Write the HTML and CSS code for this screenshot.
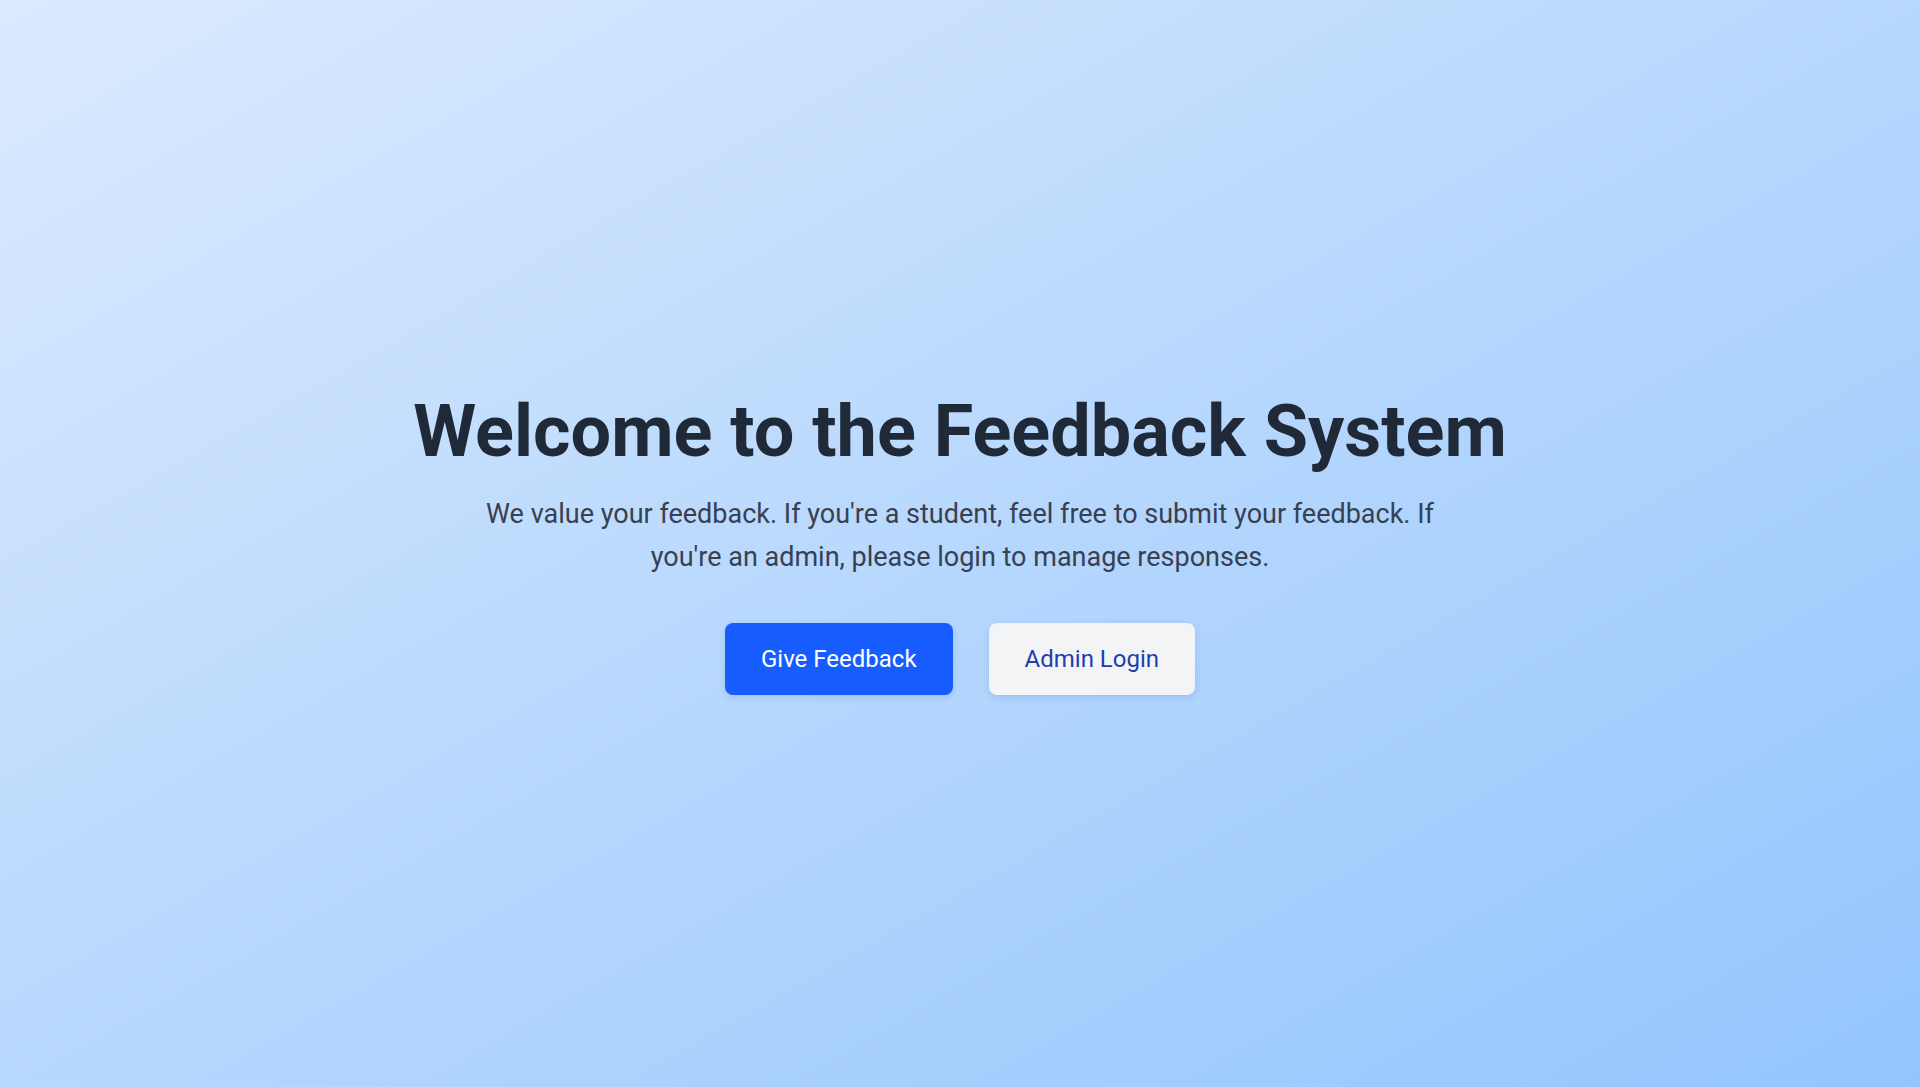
FILE: index.html
```html
<!DOCTYPE html>
<html lang="en">
<head>
<meta charset="utf-8">
<title>Feedback System</title>
<link rel="stylesheet" href="styles.css">
</head>
<body>
<main class="hero">
  <h1 class="title">Welcome to the Feedback System</h1>
  <p class="lead">We value your feedback. If you're a student, feel free to submit your feedback. If you're an admin, please login to manage responses.</p>
  <div class="actions">
    <a class="btn btn-primary" href="#">Give Feedback</a>
    <a class="btn btn-secondary" href="#">Admin Login</a>
  </div>
</main>
</body>
</html>
```
FILE: styles.css
```css
html, body {
  margin: 0;
  padding: 0;
  height: 100%;
}
body {
  font-family: Roboto, "Liberation Sans", sans-serif;
  background: linear-gradient(to bottom right, #dbeafe, #93c5fd);
}
.hero {
  min-height: 100vh;
  box-sizing: border-box;
  display: flex;
  flex-direction: column;
  align-items: center;
  justify-content: center;
  text-align: center;
}
.title {
  margin: 0;
  font-size: 72px;
  line-height: 1.1;
  font-weight: 700;
  color: #1f2937;
}
.lead {
  margin: 22px 0 0;
  max-width: 960px;
  font-size: 27px;
  line-height: 43px;
  color: #374151;
}
.actions {
  margin-top: 44px;
  display: flex;
  gap: 36px;
}
.btn {
  display: inline-block;
  padding: 22px 36px;
  font-size: 24px;
  line-height: 28px;
  border-radius: 8px;
  text-decoration: none;
}
.btn-primary {
  background: #175cff;
  color: #ffffff;
  box-shadow: 0 2px 6px rgba(30, 64, 175, 0.15);
}
.btn-secondary {
  background: #f3f4f6;
  color: #1e40af;
  box-shadow: 0 2px 6px rgba(30, 64, 175, 0.15);
}
```
